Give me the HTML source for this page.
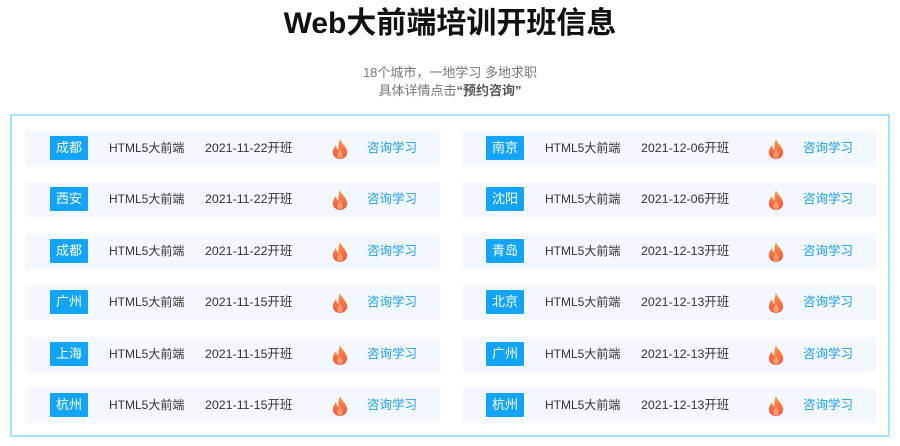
<!DOCTYPE html>
<html><head><meta charset="utf-8"><style>
*{margin:0;padding:0;box-sizing:border-box}
body{width:900px;height:446px;background:#fff;font-family:"Liberation Sans","Noto Sans CJK SC",sans-serif;position:relative;overflow:hidden}
h1{position:absolute;top:3px;left:0;width:900px;text-align:center;font-size:30px;font-weight:bold;color:#111;line-height:42px}
.sub{position:absolute;top:64px;left:0;width:900px;text-align:center;font-size:13px;color:#777;line-height:18px}
.sub b{color:#555}
.box{position:absolute;left:10px;top:114px;width:880px;height:323px;border:2px solid #a6e2fb}
.row{position:absolute;width:414px;height:35px;background:#f2f8fe;font-size:12px;color:#333}
.row .c{position:absolute;left:24px;top:5px;width:38px;height:24px;background:#14a4f5;color:#fff;text-align:center;line-height:24px;font-size:13px;border-radius:1px}
.row .n{position:absolute;left:83px;top:0;line-height:35px}
.row .d{position:absolute;left:179px;top:0;line-height:35px;font-size:12.4px}
.row svg{position:absolute;left:306px;top:8px}
.row .a{position:absolute;left:341px;top:0;line-height:35px;color:#1b9ef0;font-size:12.5px}
</style></head><body>
<h1>Web大前端培训开班信息</h1>
<div class="sub">18个城市，一地学习 多地求职<br>具体详情点击<b>“预约咨询”</b></div>
<div class="box"></div>
<svg width="0" height="0" style="position:absolute"><defs><linearGradient id="g" x1="0" y1="0" x2="0" y2="1"><stop offset="0" stop-color="#ff9a3c"/><stop offset="1" stop-color="#f2504a"/></linearGradient></defs></svg>
<div id="rows"></div>
<script>
var L=[["成都","2021-11-22"],["西安","2021-11-22"],["成都","2021-11-22"],["广州","2021-11-15"],["上海","2021-11-15"],["杭州","2021-11-15"]];
var R=[["南京","2021-12-06"],["沈阳","2021-12-06"],["青岛","2021-12-13"],["北京","2021-12-13"],["广州","2021-12-13"],["杭州","2021-12-13"]];
var tops=[131,182,234,285,337,388],h="";
var fl='<svg width="16" height="20" viewBox="0 0 16 20"><path d="M8 0C9 4 14 7 15 12C16 17 12 20 8 20C4 20 0 17 1 12C1.5 9 3 8 4 6C4.5 9 5 10 6.5 11C6 7 7 3 8 0Z" fill="url(#g)"/><path d="M8 10C9 13 11 14 11 16.5C11 18.5 9.5 19.5 8 19.5C6.5 19.5 5 18.5 5 16.5C5 14.5 7 13 8 10Z" fill="#ffc27a" opacity=".6"/></svg>';
function r(x,y,d){return '<div class="row" style="left:'+x+'px;top:'+y+'px"><span class="c">'+d[0]+'</span><span class="n">HTML5大前端</span><span class="d">'+d[1]+'开班</span>'+fl+'<span class="a">咨询学习</span></div>';}
for(var i=0;i<6;i++){h+=r(26,tops[i],L[i])+r(462,tops[i],R[i]);}
document.getElementById("rows").innerHTML=h;
</script>
</body></html>
